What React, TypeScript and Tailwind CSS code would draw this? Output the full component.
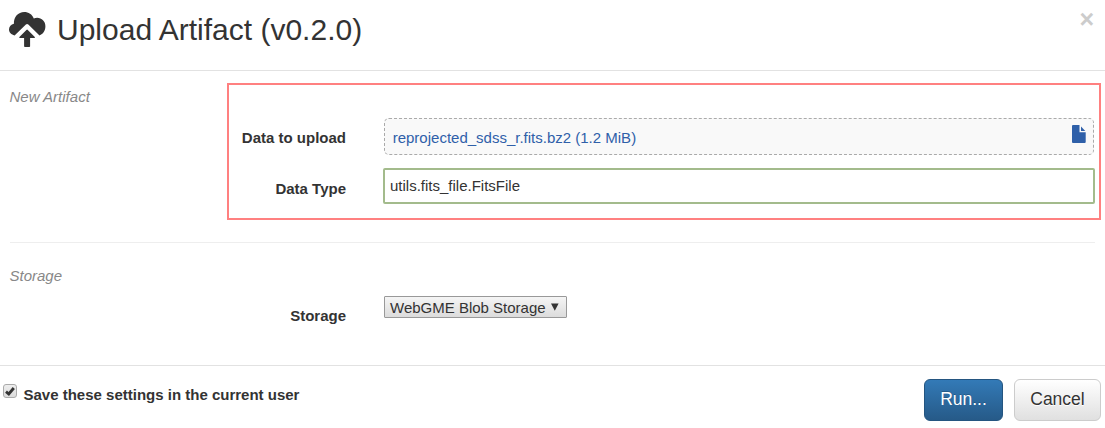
import React from 'react';

function CloudUploadIcon() {
  return (
    <svg width="37" height="36" viewBox="0 0 37 36" fill="#333" className="block shrink-0">
      <path d="M5.6 23.4C2.3 22.9 0 20.6 0 17.6C0 14.5 2.1 12.2 4.9 11.7C4.7 5.1 9.1 0 15.2 0C19.6 0 23.1 2.4 24.8 6.4C31 4.3 36.4 8.3 36.4 14.3C36.4 18.8 34 22.3 30.5 23.4L19.3 12.6Q18.1 11.5 16.9 12.6Z" />
      <path d="M17.4 18Q18.1 17.2 18.8 18L25.8 25Q26.4 26 25.3 26H21.1V34.2Q21.1 35 20.3 35H15.9Q15.1 35 15.1 34.2V26H10.9Q9.8 26 10.4 25Z" />
    </svg>
  );
}

function FileIcon() {
  return (
    <svg width="14" height="18" viewBox="0 0 14 18" fill="#2f60a9" className="mr-[7px] mt-[6px] block shrink-0">
      <path d="M1 0H7.5V7.2H13.7V17Q13.7 18 12.7 18H1Q0 18 0 17V1Q0 0 1 0Z" />
      <path d="M9 1.6L13.3 6H9Z" />
    </svg>
  );
}

export default function App() {
  return (
    <div className="flex h-[428px] w-full flex-col overflow-hidden bg-white font-['Liberation_Sans',Arial,sans-serif] text-[15px] leading-[21px] text-[#333]">
      <header className="flex h-[71px] shrink-0 items-start border-b border-[#e2e2e2] pl-[9px] pr-[11px] pt-3">
        <CloudUploadIcon />
        <h1 className="ml-[11px] mt-px text-[30px] leading-[34px]">Upload Artifact (v0.2.0)</h1>
        <button className="ml-auto mt-[-5px] text-[25px] font-bold leading-[25px] text-[#ccc]">×</button>
      </header>

      <main className="h-[294px] shrink-0">
        <section className="flex h-[171px] items-start pl-[9.5px] pr-[4px] pt-3">
          <h2 className="mt-[3px] w-[217.5px] shrink-0 italic text-[#888]">New Artifact</h2>
          <div className="flex h-[137px] flex-1 flex-col border-2 border-[#ff8080] pl-2 pr-[4px] pt-[33px]">
            <div className="flex h-[37px] items-center pr-px">
              <label className="w-[109px] shrink-0 pt-px text-right font-bold">Data to upload</label>
              <div className="ml-[38px] flex h-[37px] flex-1 items-start justify-between rounded-[5px] border border-dashed border-[#aaa] bg-[#f9f9f9] pl-[7.7px]">
                <span className="mt-2 text-[#2f60a9]">reprojected_sdss_r.fits.bz2 (1.2 MiB)</span>
                <FileIcon />
              </div>
            </div>
            <div className="mt-[13px] flex h-9 items-start">
              <label className="mt-[10px] w-[109px] shrink-0 text-right font-bold">Data Type</label>
              <input
                className="ml-[37px] h-9 min-w-0 flex-1 rounded-[2px] border-2 border-[#a3bb8c] bg-white pb-px pl-[5px] outline-none"
                defaultValue="utils.fits_file.FitsFile"
              />
            </div>
          </div>
        </section>

        <hr className="mx-[10px] border-[#eee]" />

        <section className="pl-[9.5px] pt-[22px]">
          <h2 className="italic text-[#888]">Storage</h2>
          <div className="mt-[10px] flex items-start">
            <label className="mt-[9px] w-[336.5px] text-right font-bold">Storage</label>
            <button className="ml-[38px] flex h-[22px] w-[183px] items-center rounded-[1px] border border-[#999] bg-linear-to-b from-[#f5f5f5] to-[#dcdcdc] pl-[5px]">
              WebGME Blob Storage
              <svg width="8" height="8" viewBox="0 0 8 8" fill="#333" className="ml-[5.5px] mt-[-1px]">
                <path d="M0 0.5H7.6L3.8 7.8Z" />
              </svg>
            </button>
          </div>
        </section>
      </main>

      <footer className="flex h-[63px] shrink-0 items-start border-t border-[#e2e2e2] pl-[3px] pr-[4px]">
        <label className="flex items-start">
          <span className="mt-[18px] flex h-[14px] w-[14px] items-center justify-center rounded-[3px] border border-[#aaa] bg-linear-to-b from-[#eee] to-[#dcdcdc]">
            <svg width="10" height="9" viewBox="0 0 10 9" fill="none" stroke="#333" strokeWidth="2.8">
              <path d="M1 4.6L3.8 7L8.8 1" />
            </svg>
          </span>
          <span className="ml-[6.5px] mt-[18px] font-bold">Save these settings in the current user</span>
        </label>
        <div className="ml-auto mt-[13px] flex gap-[11px] text-[17.5px] leading-6">
          <button className="h-[42px] w-[79px] rounded-[6px] border border-[#245580] bg-linear-to-b from-[#337ab7] to-[#265a88] pb-[2px] text-white [text-shadow:0_-1px_0_rgba(0,0,0,0.2)]">Run...</button>
          <button className="h-[42px] w-[87px] rounded-[6px] border border-[#ccc] bg-linear-to-b from-white to-[#e0e0e0] pb-[2px] [text-shadow:0_1px_0_#fff]">Cancel</button>
        </div>
      </footer>
    </div>
  );
}
